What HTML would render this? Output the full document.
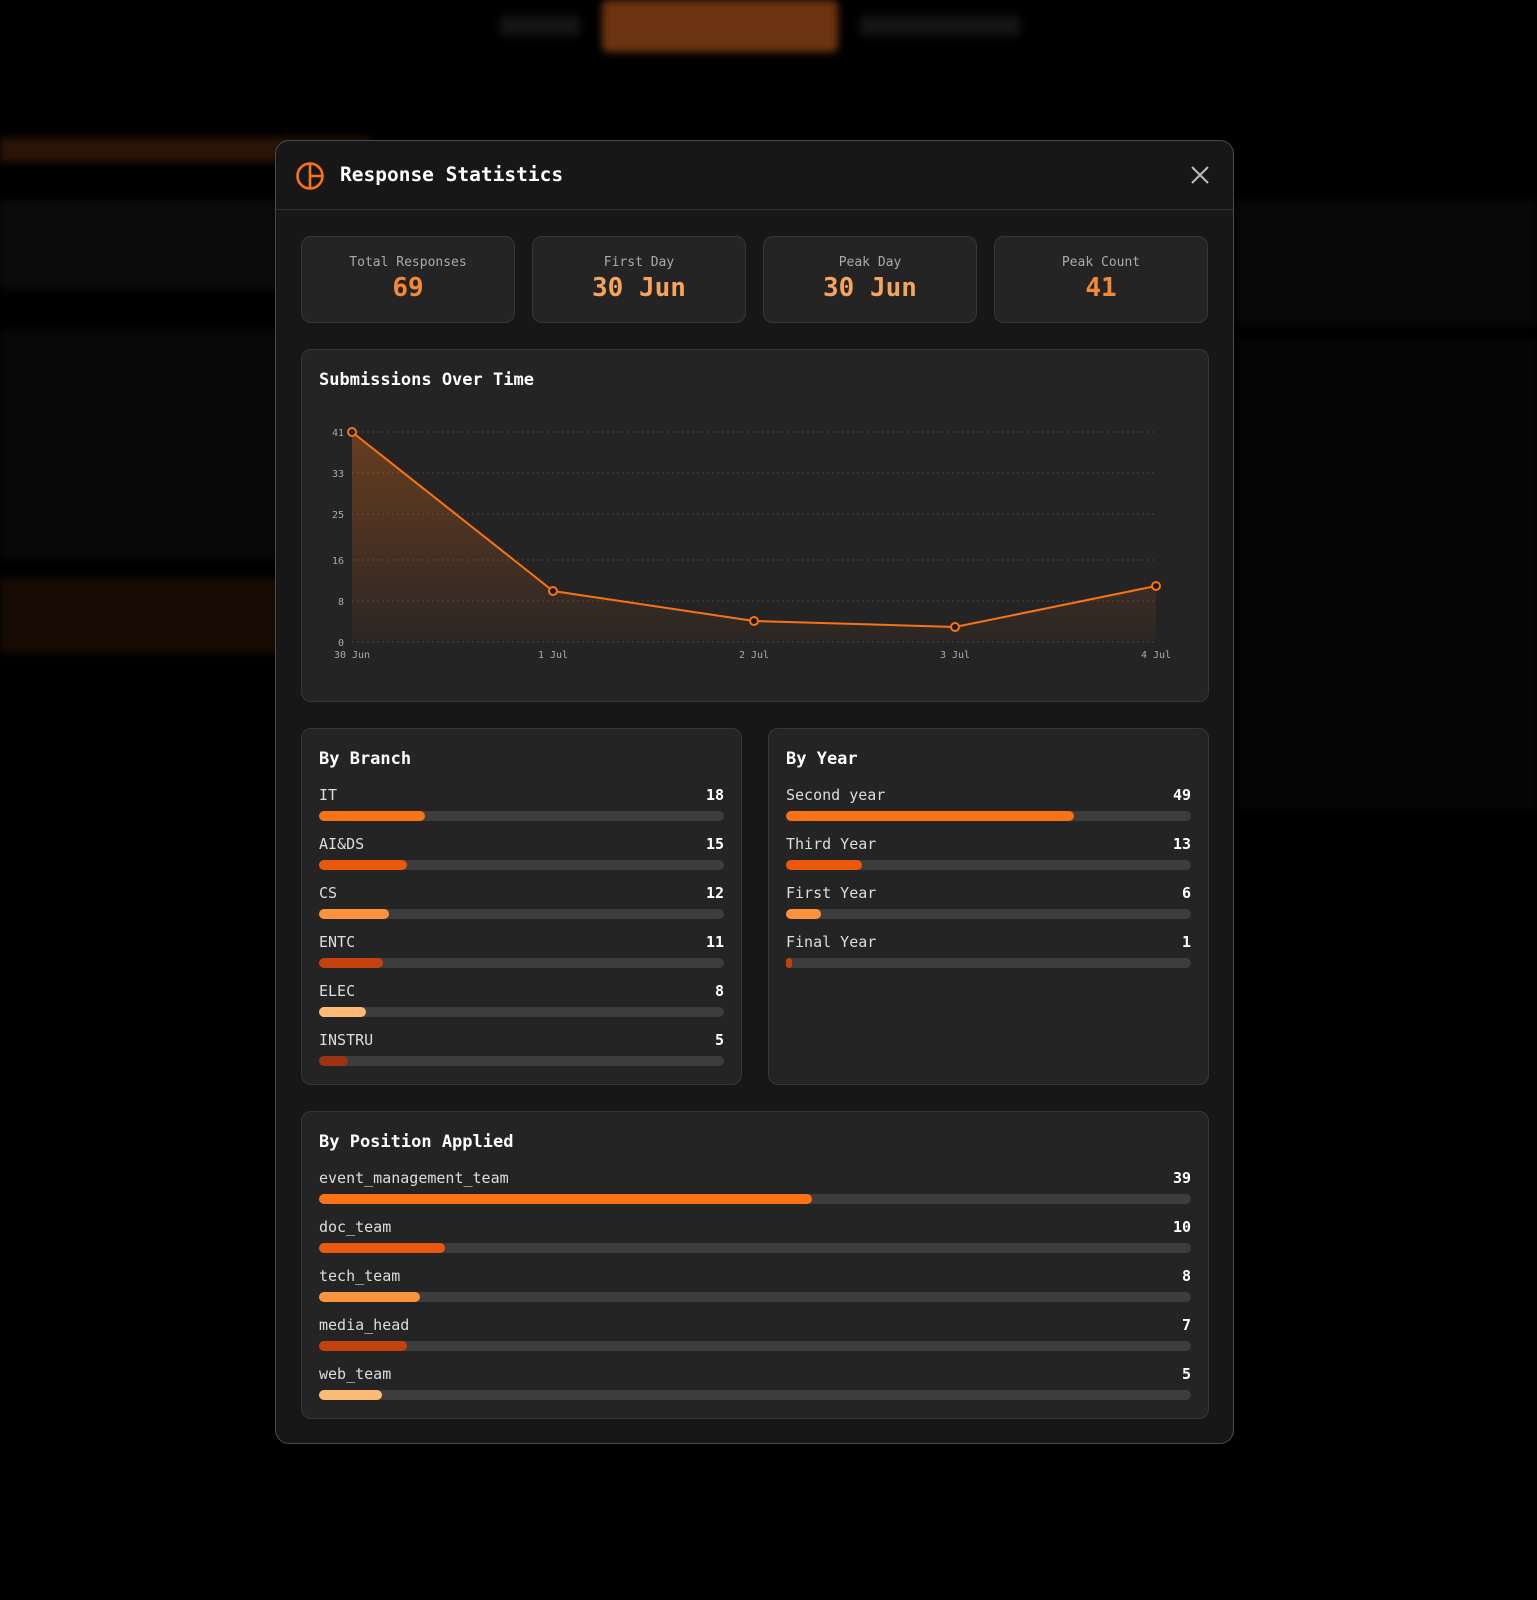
<!DOCTYPE html>
<html><head><meta charset="utf-8"><style>
*{box-sizing:border-box;margin:0;padding:0}
body{width:1537px;height:1600px;background:#000;position:relative;overflow:hidden;font-family:"DejaVu Sans Mono","Liberation Mono",monospace;color:#eee}
.abs{position:absolute}
.bg{filter:blur(4px)}
.modal{left:275px;top:140px;width:959px;height:1304px;background:#171717;border:1px solid #4a4a4a;border-radius:14px}
.hdr{left:0;top:0;width:100%;height:69px;border-bottom:1px solid #333}
.card{background:#242424;border:1px solid #363636;border-radius:10px}
.stat{top:95px;width:214px;height:87px;text-align:center}
.stat .l{font-size:13px;color:#aaa;margin-top:18px}
.stat .v{font-size:26px;font-weight:bold;color:#f5a45c;margin-top:3px}
.ttl{font-size:17px;font-weight:bold;color:#fff}
.row{position:absolute;left:17px;right:17px;height:40px}
.row .n{position:absolute;left:0;top:-1px;font-size:15px;color:#ddd}
.row .c{position:absolute;right:0;top:-1px;font-size:15px;font-weight:bold;color:#fff}
.row .t{position:absolute;left:0;right:0;top:24px;height:10px;border-radius:5px;background:#3d3d3d}
.row .f{height:10px;border-radius:5px}
</style></head><body>
<div class="abs bg" style="left:602px;top:0;width:236px;height:52px;background:#6b3310;border-radius:6px"></div>
<div class="abs bg" style="left:500px;top:16px;width:80px;height:20px;background:#141414"></div>
<div class="abs bg" style="left:860px;top:16px;width:160px;height:20px;background:#141414"></div>
<div class="abs bg" style="left:0;top:138px;width:370px;height:24px;background:#2a1406"></div>
<div class="abs bg" style="left:0;top:200px;width:280px;height:90px;background:#0b0b0b"></div>
<div class="abs bg" style="left:0;top:330px;width:280px;height:230px;background:#080808"></div>
<div class="abs bg" style="left:0;top:578px;width:280px;height:75px;background:#170b04"></div>
<div class="abs bg" style="left:1234px;top:200px;width:303px;height:125px;background:#080808"></div>
<div class="abs bg" style="left:1234px;top:340px;width:303px;height:470px;background:#050505"></div>

<div class="abs modal">
 <div class="abs hdr">
  <svg class="abs" style="left:19px;top:20px" width="30" height="30" viewBox="0 0 30 30" fill="none" stroke="#f97316" stroke-width="2.6"><circle cx="15" cy="15" r="12.5"/><path d="M15 2.5V27.5M15 15H27.5"/></svg>
  <div class="abs" style="left:64px;top:22px;font-size:19.5px;font-weight:bold;color:#fff">Response Statistics</div>
  <svg class="abs" style="left:915px;top:25px" width="18" height="18" viewBox="0 0 18 18" stroke="#bbb" stroke-width="2"><path d="M1 1L17 17M17 1L1 17"/></svg>
 </div>
 <div class="abs card stat" style="left:25px"><div class="l">Total Responses</div><div class="v" style="color:#f58a35">69</div></div>
 <div class="abs card stat" style="left:256px"><div class="l">First Day</div><div class="v">30 Jun</div></div>
 <div class="abs card stat" style="left:487px"><div class="l">Peak Day</div><div class="v">30 Jun</div></div>
 <div class="abs card stat" style="left:718px"><div class="l">Peak Count</div><div class="v" style="color:#f58a35">41</div></div>

 <div class="abs card" style="left:25px;top:208px;width:908px;height:353px">
  <div class="abs ttl" style="left:17px;top:20px">Submissions Over Time</div>
 </div>
 <svg class="abs" style="left:0;top:0" width="959" height="600" viewBox="275 140 959 600">
  <defs><linearGradient id="g" x1="0" y1="0" x2="0" y2="1"><stop offset="0" stop-color="#f97316" stop-opacity="0.32"/><stop offset="1" stop-color="#f97316" stop-opacity="0.03"/></linearGradient></defs>
  <g stroke="#444" stroke-dasharray="2 3" stroke-width="1">
   <path d="M351 431H1155M351 472H1155M351 513H1155M351 559H1155M351 600H1155M351 641H1155"/>
  </g>
  <g font-size="10" fill="#aaa" text-anchor="end" font-family="DejaVu Sans Mono,monospace">
   <text x="343" y="435">41</text><text x="343" y="476">33</text><text x="343" y="517">25</text><text x="343" y="563">16</text><text x="343" y="604">8</text><text x="343" y="645">0</text>
  </g>
  <g font-size="10" fill="#aaa" text-anchor="middle" font-family="DejaVu Sans Mono,monospace">
   <text x="351" y="657">30 Jun</text><text x="552" y="657">1 Jul</text><text x="753" y="657">2 Jul</text><text x="954" y="657">3 Jul</text><text x="1155" y="657">4 Jul</text>
  </g>
  <path d="M351 431L552 590L753 620L954 626L1155 585V641H351Z" fill="url(#g)"/>
  <path d="M351 431L552 590L753 620L954 626L1155 585" fill="none" stroke="#f97316" stroke-width="2"/>
  <g fill="#1a1a1a" stroke="#f97316" stroke-width="2">
   <circle cx="351" cy="431" r="4"/><circle cx="552" cy="590" r="4"/><circle cx="753" cy="620" r="4"/><circle cx="954" cy="626" r="4"/><circle cx="1155" cy="585" r="4"/>
  </g>
 </svg>

 <div class="abs card" style="left:25px;top:587px;width:441px;height:357px">
  <div class="abs ttl" style="left:17px;top:20px">By Branch</div>
  <div class="row" style="top:58px"><span class="n">IT</span><span class="c">18</span><div class="t"><div class="f" style="width:26.1%;background:#f97316"></div></div></div>
  <div class="row" style="top:107px"><span class="n">AI&amp;DS</span><span class="c">15</span><div class="t"><div class="f" style="width:21.7%;background:#ea580c"></div></div></div>
  <div class="row" style="top:156px"><span class="n">CS</span><span class="c">12</span><div class="t"><div class="f" style="width:17.4%;background:#fb923c"></div></div></div>
  <div class="row" style="top:205px"><span class="n">ENTC</span><span class="c">11</span><div class="t"><div class="f" style="width:15.9%;background:#c2410c"></div></div></div>
  <div class="row" style="top:254px"><span class="n">ELEC</span><span class="c">8</span><div class="t"><div class="f" style="width:11.6%;background:#fdba74"></div></div></div>
  <div class="row" style="top:303px"><span class="n">INSTRU</span><span class="c">5</span><div class="t"><div class="f" style="width:7.2%;background:#9a3412"></div></div></div>
 </div>
 <div class="abs card" style="left:492px;top:587px;width:441px;height:357px">
  <div class="abs ttl" style="left:17px;top:20px">By Year</div>
  <div class="row" style="top:58px"><span class="n">Second year</span><span class="c">49</span><div class="t"><div class="f" style="width:71%;background:#f97316"></div></div></div>
  <div class="row" style="top:107px"><span class="n">Third Year</span><span class="c">13</span><div class="t"><div class="f" style="width:18.8%;background:#ea580c"></div></div></div>
  <div class="row" style="top:156px"><span class="n">First Year</span><span class="c">6</span><div class="t"><div class="f" style="width:8.7%;background:#fb923c"></div></div></div>
  <div class="row" style="top:205px"><span class="n">Final Year</span><span class="c">1</span><div class="t"><div class="f" style="width:1.4%;background:#c2410c"></div></div></div>
 </div>

 <div class="abs card" style="left:25px;top:970px;width:908px;height:308px">
  <div class="abs ttl" style="left:17px;top:20px">By Position Applied</div>
  <div class="row" style="top:58px"><span class="n">event_management_team</span><span class="c">39</span><div class="t"><div class="f" style="width:56.5%;background:#f97316"></div></div></div>
  <div class="row" style="top:107px"><span class="n">doc_team</span><span class="c">10</span><div class="t"><div class="f" style="width:14.5%;background:#ea580c"></div></div></div>
  <div class="row" style="top:156px"><span class="n">tech_team</span><span class="c">8</span><div class="t"><div class="f" style="width:11.6%;background:#fb923c"></div></div></div>
  <div class="row" style="top:205px"><span class="n">media_head</span><span class="c">7</span><div class="t"><div class="f" style="width:10.1%;background:#c2410c"></div></div></div>
  <div class="row" style="top:254px"><span class="n">web_team</span><span class="c">5</span><div class="t"><div class="f" style="width:7.2%;background:#fdba74"></div></div></div>
 </div>
</div>
</body></html>
